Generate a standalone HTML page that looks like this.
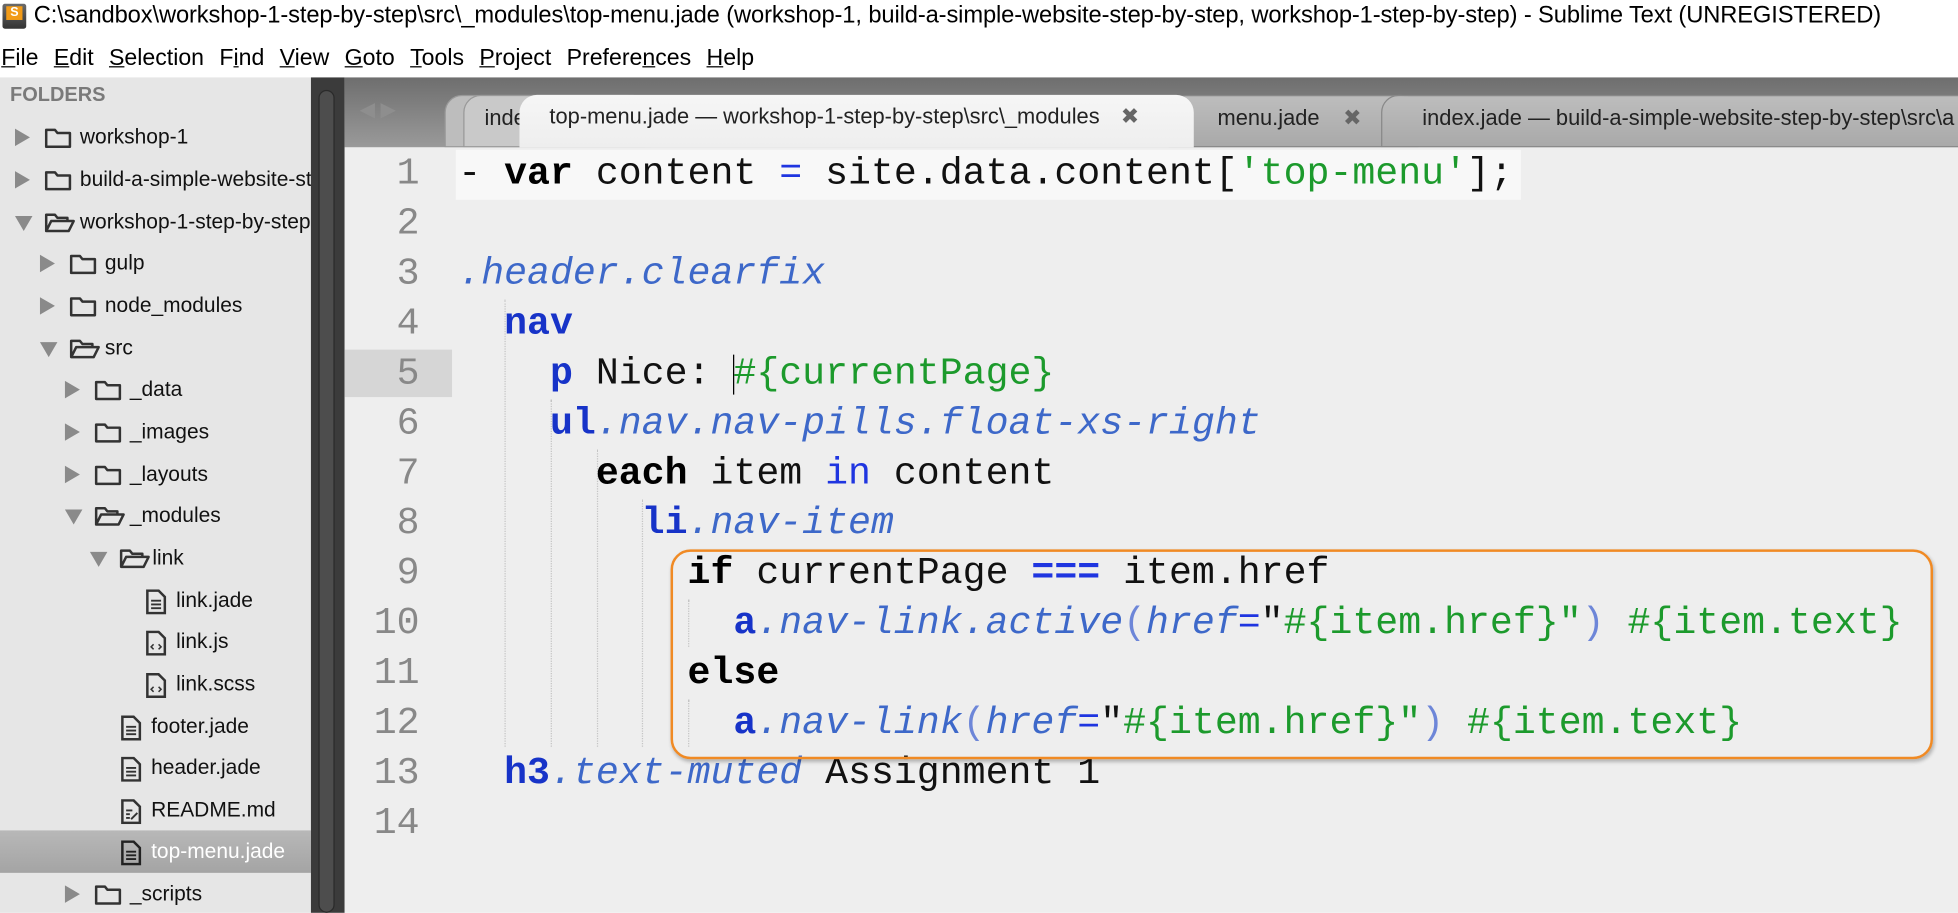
<!DOCTYPE html>
<html><head><meta charset="utf-8"><style>
*{margin:0;padding:0;box-sizing:border-box}
html,body{width:1958px;height:913px;overflow:hidden;background:#fff}
#w{width:1568px;height:731px;transform:scale(1.24872);transform-origin:0 0;position:relative;font-family:"Liberation Sans",sans-serif}
.abs{position:absolute}
#title{left:0;top:0;width:1568px;height:28px;font-size:19px;line-height:26px;color:#000;white-space:nowrap;padding-left:27px;letter-spacing:-0.1px}
#menu{left:0;top:28px;height:34px;font-size:18.5px;line-height:36px;white-space:nowrap;padding-left:1px;word-spacing:1px}
#menu u{text-decoration:underline}
#side{left:0;top:62px;width:249px;height:669px;background:#e6e6e6;overflow:hidden}
.row{position:absolute;left:0;width:249px;height:34px;font-size:16.8px;line-height:34px;color:#111;white-space:nowrap}
.row.sel{background:linear-gradient(#b8b8b8,#a4a4a4);color:#fff}
.arr{position:absolute;top:11px;width:0;height:0}
.arr.r{border-top:7px solid transparent;border-bottom:7px solid transparent;border-left:12px solid #8a8a8a;top:10px}
.arr.d{border-left:7px solid transparent;border-right:7px solid transparent;border-top:12px solid #8a8a8a;top:12px}
.ic{position:absolute;top:8px}
.tx{position:absolute}
#sb{left:249px;top:62px;width:27px;height:669px;background:#3b3b3b}
#sb div{position:absolute;left:6px;top:10px;width:13px;height:659px;background:#4d4d4d;border-radius:7px;border:1px solid #2a2a2a}
#tabs{left:276px;top:62px;width:1292px;height:56px;background:linear-gradient(#6e6e6e,#9a9a9a)}
.tab{position:absolute;top:14px;height:42px;font-size:17.5px;line-height:34px;color:#222;white-space:nowrap;border-radius:14px 14px 0 0}
#ed{left:276px;top:118px;width:1292px;height:613px;background:#eeeeee}
.ln{position:absolute;left:0;width:86px;height:40px;text-align:right;padding-right:26px;font-family:"Liberation Mono",monospace;font-size:30.6px;line-height:40px;color:#888}
.cl{position:absolute;left:91px;height:40px;font-family:"Liberation Mono",monospace;font-size:30.6px;line-height:40px;white-space:pre;color:#111}
.k{font-weight:bold;color:#000}
.t{font-weight:bold;color:#1733c8}
.c{font-style:italic;color:#3d68c9}
.s{color:#1c9a2c}
.o{color:#1f35e0}
.p{color:#6d86d8}
.g{position:absolute;width:0;border-left:1px dotted #c4c4c4}
</style></head><body><div id="w">
<div id="title" class="abs"><div style="position:absolute;left:2px;top:3px;width:19px;height:20px;background:linear-gradient(#6b6b6b,#333);border-radius:2px"><div style="position:absolute;left:3px;top:2px;width:13px;height:11px;background:#f29b18;color:#fff;font-size:10px;line-height:11px;text-align:center;font-weight:bold">S</div></div>C:\sandbox\workshop-1-step-by-step\src\_modules\top-menu.jade (workshop-1, build-a-simple-website-step-by-step, workshop-1-step-by-step) - Sublime Text (UNREGISTERED)</div>
<div id="menu" class="abs"><u>F</u>ile &nbsp;<u>E</u>dit &nbsp;<u>S</u>election &nbsp;F<u>i</u>nd &nbsp;<u>V</u>iew &nbsp;<u>G</u>oto &nbsp;<u>T</u>ools &nbsp;<u>P</u>roject &nbsp;Prefere<u>n</u>ces &nbsp;<u>H</u>elp</div>

<div id="side" class="abs">
<div style="position:absolute;left:8px;top:6px;font-size:16px;font-weight:bold;color:#7a7a7a">FOLDERS</div>
<div class="row" style="top:31px"><div class="arr r" style="left:12px"></div><svg class="ic" style="left:35px" width="24" height="19"><path d="M2 3h7l2 2.5h10v11H2z" fill="none" stroke="#333" stroke-width="2" stroke-linejoin="round"/></svg><span class="tx" style="left:64px">workshop-1</span></div>
<div class="row" style="top:65px"><div class="arr r" style="left:12px"></div><svg class="ic" style="left:35px" width="24" height="19"><path d="M2 3h7l2 2.5h10v11H2z" fill="none" stroke="#333" stroke-width="2" stroke-linejoin="round"/></svg><span class="tx" style="left:64px">build-a-simple-website-step</span></div>
<div class="row" style="top:99px"><div class="arr d" style="left:12px"></div><svg class="ic" style="left:35px" width="26" height="19"><path d="M2 16V3h7l2 2.5h8v3M2 16l4-8h18l-4 8z" fill="none" stroke="#333" stroke-width="2" stroke-linejoin="round"/></svg><span class="tx" style="left:64px">workshop-1-step-by-step</span></div>
<div class="row" style="top:132px"><div class="arr r" style="left:32px"></div><svg class="ic" style="left:55px" width="24" height="19"><path d="M2 3h7l2 2.5h10v11H2z" fill="none" stroke="#333" stroke-width="2" stroke-linejoin="round"/></svg><span class="tx" style="left:84px">gulp</span></div>
<div class="row" style="top:166px"><div class="arr r" style="left:32px"></div><svg class="ic" style="left:55px" width="24" height="19"><path d="M2 3h7l2 2.5h10v11H2z" fill="none" stroke="#333" stroke-width="2" stroke-linejoin="round"/></svg><span class="tx" style="left:84px">node_modules</span></div>
<div class="row" style="top:200px"><div class="arr d" style="left:32px"></div><svg class="ic" style="left:55px" width="26" height="19"><path d="M2 16V3h7l2 2.5h8v3M2 16l4-8h18l-4 8z" fill="none" stroke="#333" stroke-width="2" stroke-linejoin="round"/></svg><span class="tx" style="left:84px">src</span></div>
<div class="row" style="top:233px"><div class="arr r" style="left:52px"></div><svg class="ic" style="left:75px" width="24" height="19"><path d="M2 3h7l2 2.5h10v11H2z" fill="none" stroke="#333" stroke-width="2" stroke-linejoin="round"/></svg><span class="tx" style="left:104px">_data</span></div>
<div class="row" style="top:267px"><div class="arr r" style="left:52px"></div><svg class="ic" style="left:75px" width="24" height="19"><path d="M2 3h7l2 2.5h10v11H2z" fill="none" stroke="#333" stroke-width="2" stroke-linejoin="round"/></svg><span class="tx" style="left:104px">_images</span></div>
<div class="row" style="top:301px"><div class="arr r" style="left:52px"></div><svg class="ic" style="left:75px" width="24" height="19"><path d="M2 3h7l2 2.5h10v11H2z" fill="none" stroke="#333" stroke-width="2" stroke-linejoin="round"/></svg><span class="tx" style="left:104px">_layouts</span></div>
<div class="row" style="top:334px"><div class="arr d" style="left:52px"></div><svg class="ic" style="left:75px" width="26" height="19"><path d="M2 16V3h7l2 2.5h8v3M2 16l4-8h18l-4 8z" fill="none" stroke="#333" stroke-width="2" stroke-linejoin="round"/></svg><span class="tx" style="left:104px">_modules</span></div>
<div class="row" style="top:368px"><div class="arr d" style="left:72px"></div><svg class="ic" style="left:95px" width="26" height="19"><path d="M2 16V3h7l2 2.5h8v3M2 16l4-8h18l-4 8z" fill="none" stroke="#333" stroke-width="2" stroke-linejoin="round"/></svg><span class="tx" style="left:122px">link</span></div>
<div class="row" style="top:402px"><svg class="ic" style="left:116px" width="18" height="20"><path d="M2 1h9l5 5v13H2z" fill="none" stroke="#333" stroke-width="2"/><path d="M5 9h8M5 12h8M5 15h8" stroke="#333" stroke-width="1.5"/></svg><span class="tx" style="left:141px">link.jade</span></div>
<div class="row" style="top:435px"><svg class="ic" style="left:116px" width="18" height="20"><path d="M2 1h9l5 5v13H2z" fill="none" stroke="#333" stroke-width="2"/><path d="M7 11l-2 2 2 2M11 11l2 2-2 2" fill="none" stroke="#333" stroke-width="1.2"/></svg><span class="tx" style="left:141px">link.js</span></div>
<div class="row" style="top:469px"><svg class="ic" style="left:116px" width="18" height="20"><path d="M2 1h9l5 5v13H2z" fill="none" stroke="#333" stroke-width="2"/><path d="M7 11l-2 2 2 2M11 11l2 2-2 2" fill="none" stroke="#333" stroke-width="1.2"/></svg><span class="tx" style="left:141px">link.scss</span></div>
<div class="row" style="top:503px"><svg class="ic" style="left:96px" width="18" height="20"><path d="M2 1h9l5 5v13H2z" fill="none" stroke="#333" stroke-width="2"/><path d="M5 9h8M5 12h8M5 15h8" stroke="#333" stroke-width="1.5"/></svg><span class="tx" style="left:121px">footer.jade</span></div>
<div class="row" style="top:536px"><svg class="ic" style="left:96px" width="18" height="20"><path d="M2 1h9l5 5v13H2z" fill="none" stroke="#333" stroke-width="2"/><path d="M5 9h8M5 12h8M5 15h8" stroke="#333" stroke-width="1.5"/></svg><span class="tx" style="left:121px">header.jade</span></div>
<div class="row" style="top:570px"><svg class="ic" style="left:96px" width="18" height="20"><path d="M2 1h9l5 5v13H2z" fill="none" stroke="#333" stroke-width="2"/><path d="M5 9h5M5 12h3M5 15h3M9 16l5-5" stroke="#333" stroke-width="1.5"/></svg><span class="tx" style="left:121px">README.md</span></div>
<div class="row sel" style="top:603px"><svg class="ic" style="left:96px" width="18" height="20"><path d="M2 1h9l5 5v13H2z" fill="none" stroke="#222" stroke-width="2"/><path d="M5 9h8M5 12h8M5 15h8" stroke="#222" stroke-width="1.5"/></svg><span class="tx" style="left:121px">top-menu.jade</span></div>
<div class="row" style="top:637px"><div class="arr r" style="left:52px"></div><svg class="ic" style="left:75px" width="24" height="19"><path d="M2 3h7l2 2.5h10v11H2z" fill="none" stroke="#333" stroke-width="2" stroke-linejoin="round"/></svg><span class="tx" style="left:104px">_scripts</span></div>
</div>
<div id="sb" class="abs"><div></div></div>

<div id="tabs" class="abs">
<div style="position:absolute;left:12px;top:16px;color:#8e8e8e;font-size:16px">◀ ▶</div>
<div class="tab" style="left:80px;width:160px;background:#bdbdbd;border:1px solid #999"></div>
<div class="tab" style="left:95px;width:150px;background:#c9c9c9;border:1px solid #999;padding-left:16px">inde</div>
<div class="tab" style="left:660px;width:200px;background:linear-gradient(#bdbdbd,#a9a9a9);border:1px solid #888;padding-left:38px">menu.jade <span style="color:#666;margin-left:14px">✖</span></div>
<div class="tab" style="left:830px;width:480px;background:linear-gradient(#bdbdbd,#a9a9a9);border:1px solid #888;padding-left:32px">index.jade — build-a-simple-website-step-by-step\src\a</div>
<div class="tab" style="left:140px;width:540px;background:linear-gradient(#f6f6f6,#eeeeee);height:42px;padding-left:24px">top-menu.jade — workshop-1-step-by-step\src\_modules <span style="color:#666;margin-left:12px">✖</span></div>
</div>

<div id="ed" class="abs">
<div class="abs" style="left:89px;top:2px;width:853px;height:40px;background:#f8f8f8"></div>
<div class="abs" style="left:0;top:162px;width:86px;height:38px;background:#d6d6d6"></div>
<div class="g" style="left:128px;top:122px;height:358px"></div>
<div class="g" style="left:165px;top:202px;height:278px"></div>
<div class="g" style="left:202px;top:242px;height:238px"></div>
<div class="g" style="left:238px;top:282px;height:198px"></div>
<div class="g" style="left:275px;top:362px;height:38px"></div>
<div class="g" style="left:275px;top:442px;height:38px"></div>
<div class="ln" style="top:2px">1</div><div class="ln" style="top:42px">2</div><div class="ln" style="top:82px">3</div><div class="ln" style="top:122px">4</div><div class="ln" style="top:162px">5</div><div class="ln" style="top:202px">6</div><div class="ln" style="top:242px">7</div><div class="ln" style="top:282px">8</div><div class="ln" style="top:322px">9</div><div class="ln" style="top:362px">10</div><div class="ln" style="top:402px">11</div><div class="ln" style="top:442px">12</div><div class="ln" style="top:482px">13</div><div class="ln" style="top:522px">14</div>
<div class="cl" style="top:2px">- <span class="k">var</span> content <span class="o">=</span> site.data.content[<span class="s">'top-menu'</span>];</div>
<div class="cl" style="top:82px"><span class="c">.header.clearfix</span></div>
<div class="cl" style="top:122px">  <span class="t">nav</span></div>
<div class="cl" style="top:162px">    <span class="t">p</span> Nice: <span class="s">#{currentPage}</span></div>
<div class="abs" style="left:311px;top:166px;width:1px;height:32px;background:#000"></div>
<div class="cl" style="top:202px">    <span class="t">ul</span><span class="c">.nav.nav-pills.float-xs-right</span></div>
<div class="cl" style="top:242px">      <span class="k">each</span> item <span class="o">in</span> content</div>
<div class="cl" style="top:282px">        <span class="t">li</span><span class="c">.nav-item</span></div>
<div class="cl" style="top:322px">          <span class="k">if</span> currentPage <span class="o" style="font-weight:bold">===</span> item.href</div>
<div class="cl" style="top:362px">            <span class="t">a</span><span class="c">.nav-link.active</span><span class="p">(</span><span class="c">href</span><span class="o">=</span>"<span class="s">#{item.href}"</span><span class="p">)</span> <span class="s">#{item.text}</span></div>
<div class="cl" style="top:402px">          <span class="k">else</span></div>
<div class="cl" style="top:442px">            <span class="t">a</span><span class="c">.nav-link</span><span class="p">(</span><span class="c">href</span><span class="o">=</span>"<span class="s">#{item.href}"</span><span class="p">)</span> <span class="s">#{item.text}</span></div>
<div class="cl" style="top:482px">  <span class="t">h3</span><span class="c">.text-muted</span> Assignment 1</div>
<div class="abs" style="left:261px;top:322px;width:1011px;height:168px;border:2px solid #f08a24;border-radius:16px;box-shadow:1px 2px 3px rgba(0,0,0,.25)"></div>
</div>
</div></body></html>
